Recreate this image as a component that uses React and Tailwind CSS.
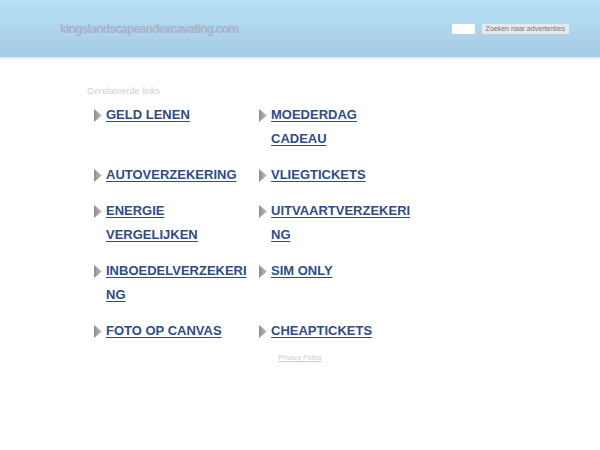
const links = [
  ["GELD LENEN", "MOEDERDAG CADEAU"],
  ["AUTOVERZEKERING", "VLIEGTICKETS"],
  ["ENERGIE VERGELIJKEN", "UITVAARTVERZEKERING"],
  ["INBOEDELVERZEKERING", "SIM ONLY"],
  ["FOTO OP CANVAS", "CHEAPTICKETS"],
];

function Arrow() {
  return (
    <svg width="9" height="13" viewBox="0 0 9 13" className="mt-[6px] shrink-0">
      <defs>
        <linearGradient id="arr" x1="0" y1="0" x2="1" y2="0">
          <stop offset="0" stopColor="#8c8c8c" />
          <stop offset="1" stopColor="#c4c4c4" />
        </linearGradient>
      </defs>
      <polygon points="0,0 8,6.5 0,13" fill="url(#arr)" />
    </svg>
  );
}

function LinkItem({ label }) {
  return (
    <div className="flex gap-[3px]">
      <Arrow />
      <a
        href="#"
        className="w-[143px] [overflow-wrap:break-word] text-[13px] font-bold leading-6 text-[#2f4c87] underline underline-offset-2"
      >
        {label}
      </a>
    </div>
  );
}

export default function App() {
  return (
    <div className="min-h-[450px] bg-white font-['Liberation_Sans',Arial,sans-serif]">
      <header className="h-[59px] border-b-2 border-[#d9eef9] bg-gradient-to-b from-[#b6dff4] to-[#a6cce5] flex items-center justify-between pl-[60px] pr-[31px] pt-[1px]">
        <span className="text-[12px] font-bold tracking-[-0.75px] text-[#a8b1c8]">
          kingslandscapeandexcavating.com
        </span>
        <div className="flex items-center gap-[7px]">
          <input className="h-[10px] w-[23px] bg-white outline-none" />
          <button className="h-[10px] bg-[#e6e8ea] px-[4px] text-[7px] leading-[10px] text-[#777]">
            Zoeken naar advertenties
          </button>
        </div>
      </header>

      <main className="pl-[87px] pt-[27px]">
        <h2 className="text-[9px] leading-[10px] text-[#cfcfcf]">Gerelateerde links</h2>
        <div className="ml-[7px] mt-[7px] flex flex-col gap-3">
          {links.map(([a, b]) => (
            <div key={a} className="grid grid-cols-[165px_165px]">
              <LinkItem label={a} />
              <LinkItem label={b} />
            </div>
          ))}
        </div>
      </main>

      <div className="mt-0 text-center">
        <a href="#" className="text-[7px] text-[#cccccc] underline">
          Privacy Policy
        </a>
      </div>
    </div>
  );
}
